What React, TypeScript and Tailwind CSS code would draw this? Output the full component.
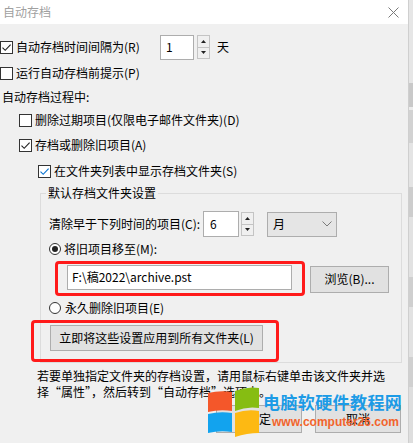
import React from "react";

function Check({ checked, blue }: { checked?: boolean; blue?: boolean }) {
  return (
    <span className="w-[13px] h-[13px] border border-[#333333] bg-white flex items-center justify-center shrink-0">
      {checked && (
        <svg width="11" height="11" viewBox="0 0 11 11">
          <path
            d="M1.5 5.6 L4.2 8.3 L9.6 2.6"
            fill="none"
            stroke={blue ? "#0a74d0" : "#222222"}
            strokeWidth="1.15"
          />
        </svg>
      )}
    </span>
  );
}

function Radio({ on }: { on?: boolean }) {
  return (
    <span className="w-[12px] h-[12px] rounded-full border border-[#333333] bg-white flex items-center justify-center shrink-0">
      {on && <span className="w-[6px] h-[6px] rounded-full bg-[#222222]" />}
    </span>
  );
}

function Arrows() {
  return (
    <div className="flex flex-col w-[13px] h-[24px] border border-[#c4c4c4] bg-[#f0f0f0] shrink-0">
      <div className="flex-1 flex items-center justify-center border-b border-[#c4c4c4]">
        <svg width="5" height="3" viewBox="0 0 5 3">
          <path d="M0 3 L2.5 0 L5 3 Z" fill="#222" />
        </svg>
      </div>
      <div className="flex-1 flex items-center justify-center">
        <svg width="5" height="3" viewBox="0 0 5 3">
          <path d="M0 0 L2.5 3 L5 0 Z" fill="#222" />
        </svg>
      </div>
    </div>
  );
}

export default function App() {
  return (
    <div className="w-[413px] h-[443px] relative overflow-hidden bg-[#f0f0f0] flex font-['Noto_Sans_CJK_SC','Microsoft_YaHei',sans-serif] text-[12px] text-black">
      <div className="w-[408px] flex flex-col">
        {/* title bar */}
        <div className="h-[24px] bg-white flex items-center justify-between pl-[3px] pr-[9px]">
          <span className="text-[#a0a0a0] leading-[16px]">自动存档</span>
          <svg width="11" height="11" viewBox="0 0 11 11">
            <path d="M0.5 0.5 L10.5 10.5 M10.5 0.5 L0.5 10.5" stroke="#7a7a7a" strokeWidth="1" />
          </svg>
        </div>

        {/* row 1 */}
        <div className="mt-[10px] h-[26px] flex items-center">
          <Check checked />
          <span className="ml-[3px] w-[144px] whitespace-nowrap">自动存档时间间隔为(R)</span>
          <div className="w-[34px] h-[25px] bg-white border border-[#adadad] flex items-center pl-[5px]">1</div>
          <div className="ml-[3px]">
            <Arrows />
          </div>
          <span className="ml-[7px]">天</span>
        </div>

        {/* row 2 */}
        <div className="h-[26px] flex items-center">
          <Check />
          <span className="ml-[3px] whitespace-nowrap">运行自动存档前提示(P)</span>
        </div>

        {/* row 3 */}
        <div className="h-[22px] flex items-center pl-[2px]">
          <span className="whitespace-nowrap">自动存档过程中:</span>
        </div>

        {/* row 4 */}
        <div className="h-[24px] flex items-center pl-[19px]">
          <Check />
          <span className="ml-[3px] whitespace-nowrap">删除过期项目(仅限电子邮件文件夹)(D)</span>
        </div>

        {/* row 5 */}
        <div className="h-[26px] flex items-center pl-[19px]">
          <Check checked />
          <span className="ml-[3px] whitespace-nowrap">存档或删除旧项目(A)</span>
        </div>

        {/* row 6 */}
        <div className="h-[26px] flex items-center pl-[38px]">
          <Check checked blue />
          <span className="ml-[3px] whitespace-nowrap">在文件夹列表中显示存档文件夹(S)</span>
        </div>

        {/* group box */}
        <div className="ml-[40px] mt-[9px] w-[362px] h-[170px] border border-[#dcdcdc] relative flex flex-col">
          <span className="absolute left-[5px] top-[-10px] px-[2px] bg-[#f0f0f0] leading-[18px] whitespace-nowrap">
            默认存档文件夹设置
          </span>

          {/* row 7 */}
          <div className="mt-[17px] h-[26px] flex items-center pl-[8px]">
            <span className="w-[154px] whitespace-nowrap">清除早于下列时间的项目(C):</span>
            <div className="w-[36px] h-[26px] bg-white border border-[#adadad] flex items-center pl-[6px]">6</div>
            <div className="ml-[2px]">
              <Arrows />
            </div>
            <div className="ml-[13px] w-[70px] h-[25px] bg-[#e5e5e5] border border-[#adadad] flex items-center justify-between pl-[5px] pr-[4px]">
              <span>月</span>
              <svg width="10" height="6" viewBox="0 0 10 6">
                <path d="M0.5 0.5 L5 5 L9.5 0.5" fill="none" stroke="#7a7a7a" strokeWidth="1" />
              </svg>
            </div>
          </div>

          {/* row 8 */}
          <div className="h-[25px] flex items-center pl-[8px]">
            <Radio on />
            <span className="ml-[3px] whitespace-nowrap">将旧项目移至(M):</span>
          </div>

          {/* red box 1 + browse */}
          <div className="flex items-start">
            <div className="ml-[14px] w-[250px] h-[35px] border-[3px] border-[#ff1a1a] rounded-[4px] shrink-0">
              <div className="ml-[9px] mt-[1px] w-[225px] h-[25px] bg-white border border-[#adadad] flex items-center pl-[4px] whitespace-nowrap">
                F:\稿2022\archive.pst
              </div>
            </div>
            <div className="ml-[5px] mt-[5px] w-[79px] h-[27px] bg-[#e1e1e1] border border-[#adadad] flex items-center justify-center whitespace-nowrap">
              浏览(B)...
            </div>
          </div>

          {/* row 9 */}
          <div className="mt-[2px] h-[22px] flex items-center pl-[8px]">
            <Radio />
            <span className="ml-[4px] whitespace-nowrap">永久删除旧项目(E)</span>
          </div>

          {/* red box 2 */}
          <div className="mt-[1px] ml-[-10px] w-[248px] h-[42px] border-[3px] border-[#ff1a1a] rounded-[4px] shrink-0">
            <div className="ml-[16px] mt-[2px] w-[213px] h-[26px] bg-[#e1e1e1] border border-[#adadad] flex items-center justify-center whitespace-nowrap">
              立即将这些设置应用到所有文件夹(L)
            </div>
          </div>
        </div>

        {/* paragraph */}
        <div className="mt-[5px] pl-[37px] leading-[16px] whitespace-nowrap">
          <div>若要单独指定文件夹的存档设置，请用鼠标右键单击该文件夹并选</div>
          <div>择“属性”，然后转到“自动存档”选项卡。</div>
        </div>

        {/* buttons */}
        <div className="mt-[5px] flex justify-end pr-[7px] gap-[13px]">
          <div className="w-[86px] h-[28px] bg-[#e1e1e1] border border-[#adadad] flex items-center justify-center">确定</div>
          <div className="w-[86px] h-[28px] bg-[#e1e1e1] border border-[#adadad] flex items-center justify-center">取消</div>
        </div>
      </div>

      {/* right strip (window behind) */}
      <div className="w-[5px] flex flex-col border-l border-[#cfcfcf]">
        <div className="h-[83px] bg-[#e6e6e6]" />
        <div className="h-[24px] bg-[#c9c9c9]" />
        <div className="h-[3px] bg-[#ececec]" />
        <div className="h-[33px] bg-[#d2d2d2]" />
        <div className="h-[44px] bg-[#e4e4e4]" />
        <div className="h-[30px] bg-[#cdcdcd]" />
        <div className="h-[60px] bg-[#e2e2e2]" />
        <div className="h-[30px] bg-[#cfcfcf]" />
        <div className="h-[50px] bg-[#e2e2e2]" />
        <div className="h-[30px] bg-[#d0d0d0]" />
        <div className="flex-1 bg-[#dedede]" />
      </div>

      {/* watermark overlay */}
      <div className="absolute left-[208px] top-[386px] flex items-start pointer-events-none">
        <svg width="52" height="52" viewBox="0 0 52 52" className="shrink-0">
          <path d="M0 7 Q12 4 24 6 L24 25 Q12 23 0 26 Z" fill="#f4572a" />
          <path d="M27 5 Q39 0 51 2 L51 22 Q39 20 27 25 Z" fill="#86bd12" />
          <path d="M0 28 Q12 25 24 27 L24 46 Q12 44 0 47 Z" fill="#12a3ee" />
          <path d="M27 27 Q39 23 51 25 L51 47 Q39 47 27 51 Z" fill="#fdb913" />
        </svg>
        <div className="ml-[3px] flex flex-col">
          <span className="mt-[6px] text-[17px] leading-[20px] font-bold text-[#1c9be6] tracking-[0.4px] whitespace-nowrap font-['Noto_Sans_CJK_SC',sans-serif]">
            电脑软硬件教程网
          </span>
          <span className="ml-[9px] mt-[3px] text-[12px] leading-[14px] font-bold text-[#f2642c] whitespace-nowrap font-['Liberation_Sans',sans-serif]">
            www.computer26.com
          </span>
        </div>
      </div>
    </div>
  );
}
